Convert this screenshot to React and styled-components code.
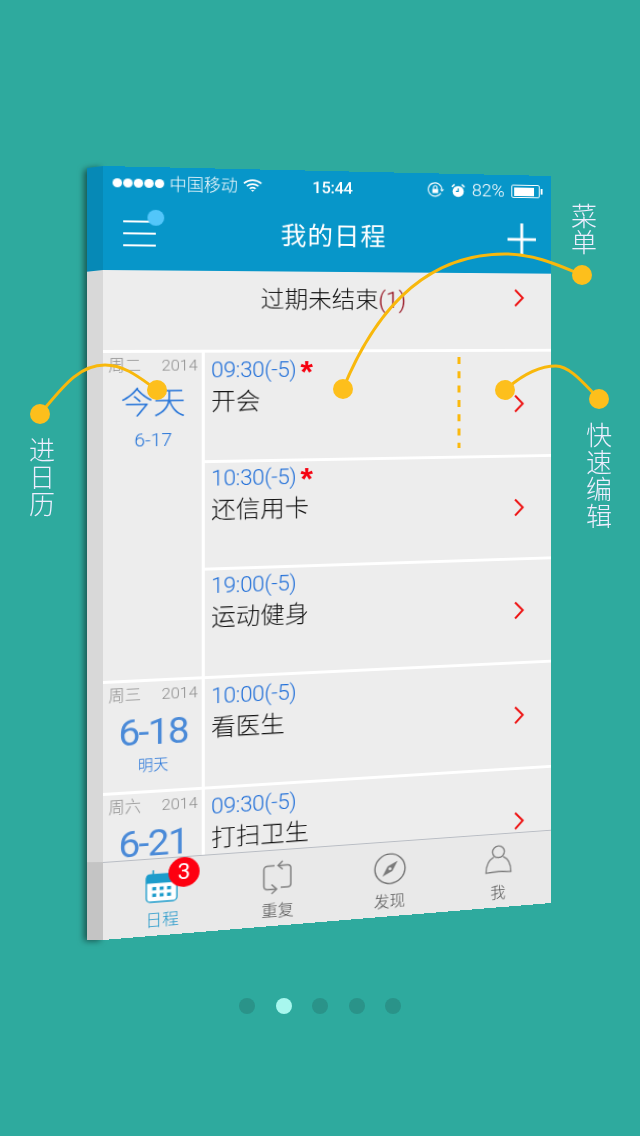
import React from "react";
import styled, { createGlobalStyle } from "styled-components";

const SCREEN_W = 448;
const SCREEN_H = 774;
const SIDE_W = 16;

// matrix3d that takes a w x h box (origin top left) onto four corner points
const quadMatrix = (w, h, [x0, y0], [x1, y1], [x2, y2], [x3, y3]) => {
  const dx1 = x1 - x2;
  const dx2 = x3 - x2;
  const sx = x0 - x1 + x2 - x3;
  const dy1 = y1 - y2;
  const dy2 = y3 - y2;
  const sy = y0 - y1 + y2 - y3;
  const det = dx1 * dy2 - dx2 * dy1;
  const g = (sx * dy2 - dx2 * sy) / det;
  const k = (dx1 * sy - sx * dy1) / det;
  const a = x1 - x0 + g * x1;
  const b = x3 - x0 + k * x3;
  const d = y1 - y0 + g * y1;
  const e = y3 - y0 + k * y3;
  return `matrix3d(${[
    a / w, d / w, 0, g / w,
    b / h, e / h, 0, k / h,
    0, 0, 1, 0,
    x0, y0, 0, 1,
  ].join(",")})`;
};

const SCREEN_MATRIX = quadMatrix(SCREEN_W, SCREEN_H, [0, 0], [448, 10], [448, 737], [0, 774]);
const SIDE_MATRIX = quadMatrix(SIDE_W, SCREEN_H, [0, 2], [16, 0], [16, 774], [0, 774]);

const DAYS = [
  {
    week: "周二",
    big: "今天",
    bigSize: 31,
    sub: "6-17",
    subSize: 18.5,
    height: 330.5,
    items: [
      { time: "09:30(-5)", title: "开会", star: true, height: 109 },
      { time: "10:30(-5)", title: "还信用卡", star: true, height: 109 },
      { time: "19:00(-5)", title: "运动健身", height: 109.5 },
    ],
  },
  {
    week: "周三",
    big: "6-18",
    bigSize: 37,
    tight: true,
    sub: "明天",
    subSize: 14.5,
    height: 112,
    items: [{ time: "10:00(-5)", title: "看医生", height: 109 }],
  },
  {
    week: "周六",
    big: "6-21",
    bigSize: 37,
    tight: true,
    height: 111,
    items: [{ time: "09:30(-5)", title: "打扫卫生", height: 108 }],
  },
];

const Chevron = () => (
  <ChevronBox viewBox="0 0 12 20" width="12" height="20">
    <path d="M2 1.5 L10 10 L2 18.5" fill="none" stroke="#ee1111" strokeWidth="2.1" />
  </ChevronBox>
);

const WifiIcon = () => (
  <svg viewBox="0 0 20 15" width="19" height="15">
    <path d="M1 5.2 C6 .6 14 .6 19 5.2 M4 8.2 C7.5 5.2 12.5 5.2 16 8.2 M7 11 C8.8 9.6 11.2 9.6 13 11" fill="none" stroke="#fff" strokeWidth="1.8" />
    <path d="M8.3 12.2 L10 14.4 L11.7 12.2 Z" fill="#fff" />
  </svg>
);

const RotationIcon = () => (
  <svg viewBox="0 0 17 16" width="17" height="16">
    <path d="M13.6 11.5 A7 7 0 1 1 14.6 7.5" fill="none" stroke="#fff" strokeWidth="1.1" />
    <path d="M12.6 7.5 L17 7.5 L14.8 10 Z" fill="#fff" />
    <rect x="4.8" y="7.2" width="6" height="4.4" fill="#fff" />
    <path d="M6 7.2 V5.6 A1.8 1.8 0 0 1 9.6 5.6 V7.2" fill="none" stroke="#fff" strokeWidth="1.1" />
  </svg>
);

const AlarmIcon = () => (
  <svg viewBox="0 0 16 16" width="15" height="15">
    <circle cx="8" cy="9" r="6.2" fill="#fff" />
    <path d="M8 5.5 V9 H5.5" fill="none" stroke="#0796c9" strokeWidth="1.3" />
    <path d="M1 4 L4 1.2 M15 4 L12 1.2" stroke="#fff" strokeWidth="1.8" />
  </svg>
);

const CalendarIcon = () => (
  <svg viewBox="0 0 34 36" width="32" height="34">
    <rect x="1" y="6" width="31" height="29" rx="4" fill="#fff" stroke="#1c9ccb" strokeWidth="1.4" />
    <path d="M1 15 V9 a4 4 0 0 1 4 -4 H28 a4 4 0 0 1 4 4 V15 Z" fill="#1c9ccb" />
    <path d="M8 1 V7 M25 1 V7" stroke="#1c9ccb" strokeWidth="1.6" />
    {[7, 14.5, 22].map((x) => (
      <React.Fragment key={x}>
        <rect x={x} y="19" width="4" height="3.6" fill="#1c9ccb" />
        <rect x={x} y="26" width="4" height="3.6" fill="#1c9ccb" />
      </React.Fragment>
    ))}
  </svg>
);

const RepeatIcon = () => (
  <svg viewBox="0 0 30 35" width="30" height="35" fill="none" stroke="#808080" strokeWidth="1.5">
    <path d="M12 5.5 H5 a3.5 3.5 0 0 0 -3.5 3.5 V26 a3.5 3.5 0 0 0 3.5 3.5 H13.5" />
    <path d="M9 24.5 L14 29.5 L9 34" />
    <path d="M16 5.5 H25 a3 3 0 0 1 3 3 V25 a3 3 0 0 1 -3 3 H18" />
    <path d="M20 1 L15.5 5.5 L20 9.5" />
  </svg>
);

const CompassIcon = () => (
  <svg viewBox="0 0 34 34" width="33" height="33">
    <circle cx="17" cy="17" r="15.8" fill="none" stroke="#6c6c6c" strokeWidth="1.4" />
    <path d="M25 9 L19.5 19.5 L9 25 L14.5 14.5 Z" fill="#7a7a7a" />
    <circle cx="17" cy="17" r="1.6" fill="#e9e9e9" />
  </svg>
);

const PersonIcon = () => (
  <svg viewBox="0 0 30 36" width="29" height="35" fill="none" stroke="#7c7c7c" strokeWidth="1.4">
    <circle cx="15" cy="8.5" r="6.4" />
    <path d="M10 14 C4 17 1.5 24 1.5 31 C10 30 20 30 28.5 31 C28.5 24 26 17 20 14" />
  </svg>
);

const TABS = [
  { label: "日程", Icon: CalendarIcon, active: true, badge: 3 },
  { label: "重复", Icon: RepeatIcon },
  { label: "发现", Icon: CompassIcon },
  { label: "我", Icon: PersonIcon },
];

const App = () => (
  <Page>
    <GlobalStyle />
    <Phone>
      <Side>
        <SideTop />
        <SideMiddle />
        <SideBottom />
      </Side>
      <Screen>
        <Header>
          <StatusBar>
            <Carrier>
              <SignalDots>
                {[0, 1, 2, 3, 4].map((i) => (
                  <SignalDot key={i} />
                ))}
              </SignalDots>
              <span>中国移动</span>
              <WifiIcon />
            </Carrier>
            <Clock>15:44</Clock>
            <StatusRight>
              <RotationIcon />
              <AlarmIcon />
              <span>82%</span>
              <Battery>
                <BatteryFill />
              </Battery>
            </StatusRight>
          </StatusBar>
          <NavBar>
            <MenuButton>
              <MenuLine />
              <MenuLine />
              <MenuLine />
              <MenuDot />
            </MenuButton>
            <NavTitle>我的日程</NavTitle>
            <svg viewBox="0 0 30 34" width="30" height="34">
              <path d="M15 0 V34 M0 17 H30" stroke="#fff" strokeWidth="3" />
            </svg>
          </NavBar>
        </Header>

        <List>
          <OverdueRow>
            <OverdueText>
              过期未结束<OverdueCount>(1)</OverdueCount>
            </OverdueText>
            <OverdueChevron>
              <Chevron />
            </OverdueChevron>
          </OverdueRow>

          {DAYS.map((day) => (
            <Day key={day.week} $height={day.height}>
              <DateCol>
                <DateTop>
                  <span>{day.week}</span>
                  <span>2014</span>
                </DateTop>
                <DateBig $size={day.bigSize} $tight={day.tight}>{day.big}</DateBig>
                {day.sub && <DateSub $size={day.subSize} $tight={day.tight}>{day.sub}</DateSub>}
              </DateCol>
              <Items>
                {day.items.map((item) => (
                  <Item key={item.title} $height={item.height}>
                    <ItemText>
                      <ItemTime>
                        {item.time}
                        {item.star && <Star>*</Star>}
                      </ItemTime>
                      <ItemTitle>{item.title}</ItemTitle>
                    </ItemText>
                    <Chevron />
                  </Item>
                ))}
              </Items>
            </Day>
          ))}
        </List>

        <TabBar>
          {TABS.map(({ label, Icon, active, badge }) => (
            <Tab key={label}>
              <TabIcon>
                <Icon />
                {badge && <Badge>{badge}</Badge>}
              </TabIcon>
              <TabLabel $active={active}>{label}</TabLabel>
            </Tab>
          ))}
        </TabBar>
      </Screen>
    </Phone>

    <Pager>
      {[0, 1, 2, 3, 4].map((i) => (
        <PagerDot key={i} $active={i === 1} />
      ))}
    </Pager>

    <Notes viewBox="0 0 640 1136" width="640" height="1136">
      <NoteLine d="M40 414 C62 388 78 365 105 365 C125 365 140 378 157 390" />
      <NoteLine d="M343 389 C372 318 420 254 505 254 C535 254 560 266 582 275" />
      <NoteLine d="M505 390 C522 375 538 366 556 366 C570 366 585 385 599 399" />
      <line x1="459" y1="357" x2="459" y2="448" stroke="#fbb90e" strokeWidth="3" strokeDasharray="7 7.3" />
      {[
        [40, 414],
        [157, 390],
        [343, 389],
        [582, 275],
        [505, 390],
        [599, 399],
      ].map(([cx, cy]) => (
        <circle key={cx} cx={cx} cy={cy} r="10" fill="#fdbf1c" />
      ))}
    </Notes>

    <NoteLabel $left={28} $top={438}>进日历</NoteLabel>
    <NoteLabel $left={570} $top={204} $pitch={26}>菜单</NoteLabel>
    <NoteLabel $left={585} $top={423}>快速编辑</NoteLabel>
  </Page>
);

const GlobalStyle = createGlobalStyle`
  html, body {
    margin: 0;
    padding: 0;
    background: #2eaa9e;
  }
  body {
    font-family: Roboto, "Noto Sans CJK SC", sans-serif;
    font-weight: 400;
  }
`;

const Page = styled.div`
  position: relative;
  width: 640px;
  height: 1136px;
  overflow: hidden;
  padding-top: 166px;
  box-sizing: border-box;
  display: flex;
  flex-direction: column;
`;

const Phone = styled.div`
  display: flex;
  height: ${SCREEN_H}px;
  padding-left: 87px;
`;

const Side = styled.div`
  width: ${SIDE_W}px;
  height: ${SCREEN_H}px;
  flex: none;
  display: flex;
  flex-direction: column;
  transform-origin: 0 0;
  transform: ${SIDE_MATRIX};
  box-shadow: -3px 1px 6px rgba(0, 0, 0, 0.5);
`;

const SideTop = styled.div`
  height: 104px;
  background: #0689b6;
`;

const SideMiddle = styled.div`
  flex: 1;
  background: #d8d8d8;
`;

const SideBottom = styled.div`
  height: 78px;
  background: #c4c4c4;
`;

const Screen = styled.div`
  width: ${SCREEN_W}px;
  height: ${SCREEN_H}px;
  flex: none;
  display: flex;
  flex-direction: column;
  transform-origin: 0 0;
  transform: ${SCREEN_MATRIX};
  background: #ededed;
`;

const Header = styled.div`
  height: 104px;
  flex: none;
  background: #0796c9;
  color: #fff;
`;

const StatusBar = styled.div`
  height: 32px;
  padding: 0 9px;
  display: grid;
  grid-template-columns: 1fr auto 1fr;
  align-items: center;
  font-size: 16.5px;
  font-weight: 300;
`;

const Carrier = styled.div`
  display: flex;
  align-items: center;
  gap: 5px;
`;

const SignalDots = styled.div`
  display: flex;
  gap: 1px;
`;

const SignalDot = styled.i`
  width: 9px;
  height: 9px;
  border-radius: 50%;
  background: #fff;
`;

const Clock = styled.div`
  margin: 2px 3px 0 0;
  font-size: 16.5px;
  font-weight: 500;
  letter-spacing: -0.3px;
`;

const StatusRight = styled.div`
  display: flex;
  justify-content: flex-end;
  align-items: center;
  gap: 7px;
  font-size: 18.5px;
  margin-top: 2px;
`;

const Battery = styled.div`
  position: relative;
  width: 30px;
  height: 14px;
  padding: 1.5px;
  border: 1px solid #fff;
  border-radius: 2px;
  box-sizing: border-box;
  margin-right: 3px;
  &::after {
    content: "";
    position: absolute;
    right: -4px;
    top: 3px;
    width: 2px;
    height: 6px;
    background: #fff;
  }
`;

const BatteryFill = styled.div`
  width: 85%;
  height: 100%;
  background: #fff;
`;

const NavBar = styled.div`
  height: 72px;
  padding: 0 16px 0 19px;
  display: flex;
  align-items: center;
  justify-content: space-between;
`;

const MenuButton = styled.div`
  position: relative;
  width: 31px;
  height: 26px;
  margin-top: -2px;
  display: flex;
  flex-direction: column;
  justify-content: space-between;
`;

const MenuLine = styled.i`
  height: 2px;
  background: #fff;
`;

const MenuDot = styled.i`
  position: absolute;
  right: -8px;
  top: -11px;
  width: 16px;
  height: 16px;
  border-radius: 50%;
  background: #52c6fa;
`;

const NavTitle = styled.div`
  margin: -7px 4px 0 0;
  font-size: 25.5px;
  letter-spacing: 1px;
`;

const List = styled.div`
  flex: 1;
  min-height: 0;
  overflow: hidden;
  color: #333;
`;

const OverdueRow = styled.div`
  height: 83px;
  box-sizing: border-box;
  padding-top: 12px;
  display: flex;
  justify-content: center;
  border-bottom: 3px solid #fff;
`;

const OverdueText = styled.div`
  font-size: 23.5px;
  font-weight: 300;
  line-height: 34px;
  color: #111;
`;

const OverdueCount = styled.span`
  color: #900010;
`;

const OverdueChevron = styled.div`
  position: absolute;
  right: 28px;
  top: 120px;
`;

const Day = styled.div`
  height: ${(p) => p.$height}px;
  display: flex;
  border-bottom: 3px solid #fff;
  box-sizing: border-box;
`;

const DateCol = styled.div`
  width: 85px;
  flex: none;
  padding: 1px 4px 0 5px;
  border-right: 3px solid #fff;
  color: #3f84d6;
  text-align: center;
`;

const DateTop = styled.div`
  display: flex;
  justify-content: space-between;
  font-size: 15.5px;
  font-weight: 300;
  line-height: 24px;
  color: #8c8c8c;
`;

const DateBig = styled.div`
  font-size: ${(p) => p.$size}px;
  font-weight: ${(p) => (p.$tight ? 400 : 300)};
  color: ${(p) => (p.$tight ? "#4a8ad8" : "#2272d8")};
  letter-spacing: ${(p) => (p.$tight ? "-1.6px" : "0")};
  line-height: 44px;
  margin-top: 4px;
`;

const DateSub = styled.div`
  font-size: ${(p) => p.$size}px;
  font-weight: 300;
  color: #2272d8;
  line-height: 30px;
  margin-top: ${(p) => (p.$tight ? "-3px" : "0")};
`;

const Items = styled.div`
  flex: 1;
  min-width: 0;
`;

const Item = styled.div`
  height: ${(p) => p.$height}px;
  box-sizing: border-box;
  padding: 0 28px 0 6px;
  display: flex;
  align-items: center;
  justify-content: space-between;
  & + & {
    border-top: 3px solid #fff;
  }
`;

const ItemText = styled.div`
  align-self: flex-start;
  padding-top: 3px;
  ${Item} + ${Item} & {
    padding-top: 1px;
  }
`;

const ItemTime = styled.div`
  font-size: 22px;
  font-weight: 300;
  letter-spacing: -0.3px;
  line-height: 30px;
  color: #1f6ed8;
`;

const Star = styled.span`
  position: relative;
  top: 6px;
  font-family: "Liberation Sans", sans-serif;
  font-weight: 700;
  font-size: 32px;
  line-height: 20px;
  color: #f5000f;
  margin-left: 4px;
`;

const ItemTitle = styled.div`
  font-size: 24px;
  font-weight: 300;
  line-height: 34px;
  color: #111;
`;

const ChevronBox = styled.svg`
  flex: none;
`;

const TabBar = styled.div`
  height: 78px;
  flex: none;
  display: grid;
  grid-template-columns: repeat(4, 1fr);
  background: #e9e9e9;
  border-top: 1px solid #b9bdc4;
  box-sizing: border-box;
`;

const Tab = styled.div`
  display: flex;
  flex-direction: column;
  align-items: center;
  padding-top: 9px;
`;

const TabIcon = styled.div`
  position: relative;
  height: 36px;
  display: flex;
  align-items: center;
`;

const Badge = styled.div`
  position: absolute;
  left: 22px;
  top: -9px;
  width: 30px;
  height: 30px;
  border-radius: 50%;
  background: #fe0010;
  color: #fff;
  font-size: 22px;
  line-height: 30px;
  text-align: center;
`;

const TabLabel = styled.div`
  margin-top: 5px;
  font-size: 16px;
  font-weight: 300;
  line-height: 24px;
  color: ${(p) => (p.$active ? "#1f96ca" : "#555")};
`;

const Pager = styled.div`
  margin-top: 58px;
  display: flex;
  justify-content: center;
  gap: 20.5px;
`;

const PagerDot = styled.i`
  width: 16px;
  height: 16px;
  border-radius: 50%;
  background: ${(p) => (p.$active ? "#a8f7ee" : "#2a9389")};
`;

const Notes = styled.svg`
  position: absolute;
  left: 0;
  top: 0;
  z-index: 2;
  pointer-events: none;
`;

const NoteLine = styled.path`
  fill: none;
  stroke: #f8b80c;
  stroke-width: 3;
`;

const NoteLabel = styled.div`
  position: absolute;
  z-index: 2;
  left: ${(p) => p.$left}px;
  top: ${(p) => p.$top}px;
  width: 28px;
  font-size: 26px;
  font-weight: 300;
  line-height: ${(p) => p.$pitch || 27}px;
  text-align: center;
  color: #eef;
`;

export default App;
